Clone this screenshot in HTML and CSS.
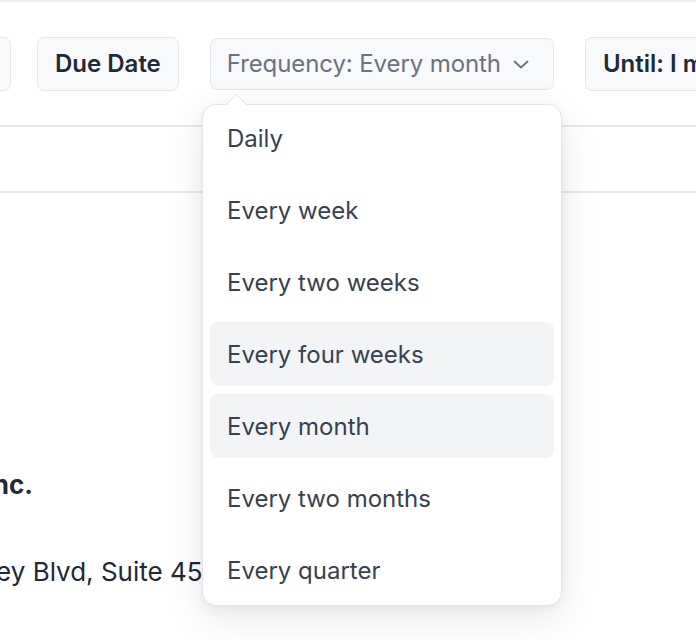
FILE: index.html
```html
<!DOCTYPE html>
<html lang="en">

<head>
    <meta charset="UTF-8" />
    <meta name="viewport" content="width=device-width, initial-scale=1.0" />
    <title>Invoice Schedule</title>
    <link rel="stylesheet" href="styles.css">
</head>

<body>
    <div class="page">
        <div class="toolbar">
            <button class="chip chip-first">Invoice #</button>
            <button class="chip">Due Date</button>
            <button class="chip chip-select">
                <span>Frequency: Every month</span>
                <svg class="chevron" width="16" height="16" viewBox="0 0 16 16">
                    <path d="M1.5 5.5 L8 11.5 L14.5 5.5" fill="none" stroke="currentColor" stroke-width="1.8" stroke-linecap="round" stroke-linejoin="round" />
                </svg>
            </button>
            <button class="chip">Until: I manually stop</button>
        </div>

        <div class="row"></div>

        <div class="client">
            <p class="client-name">Globex Tech Inc.</p>
            <p class="client-address">4200 Valley Blvd, Suite 450</p>
        </div>

        <div class="menu">
            <span class="menu-arrow"></span>
            <ul class="menu-list">
                <li class="menu-item">Daily</li>
                <li class="menu-item">Every week</li>
                <li class="menu-item">Every two weeks</li>
                <li class="menu-item hover">Every four weeks</li>
                <li class="menu-item selected">Every month</li>
                <li class="menu-item">Every two months</li>
                <li class="menu-item">Every quarter</li>
            </ul>
        </div>
    </div>
</body>

</html>
```

FILE: styles.css
```css
body {
    margin: 0;
    font-family: Inter, "Noto Sans", sans-serif;
    background: white;
    color: #1f2937;
    overflow: hidden;
}

.page {
    position: relative;
    height: 640px;
    border-top: 2px solid #eceef1;
}

.toolbar {
    display: flex;
    align-items: center;
    gap: 31px;
    height: 125px;
    margin-left: -100px;
    border-bottom: 2px solid #e7e9ec;
    box-sizing: border-box;
}

.chip {
    display: flex;
    align-items: center;
    height: 54px;
    padding: 0 17px;
    font-family: inherit;
    font-size: 24px;
    font-weight: 600;
    color: #1f2937;
    background: #f8f9fa;
    border: 1px solid #e3e6ea;
    border-radius: 7px;
    white-space: nowrap;
    flex-shrink: 0;
}

.chip-first {
    width: 111px;
    margin-right: -5px;
    color: transparent;
}

.chip-select {
    height: 52px;
    gap: 12px;
    font-weight: 400;
    color: #6b7280;
    padding-left: 16px;
    padding-right: 24px;
}

.chip-select span {
    letter-spacing: -0.1px;
}

.chevron {
    color: #6b7280;
}

.row {
    height: 66px;
    border-bottom: 2px solid #e7e9ec;
    box-sizing: border-box;
}

.client {
    padding-top: 276px;
}

.client-name {
    width: 400px;
    margin: 0 0 0 -367px;
    text-align: right;
    font-size: 26px;
    line-height: 32px;
    font-weight: 700;
    color: #1f2937;
}

.client-address {
    width: 500px;
    margin: 55px 0 0 -281px;
    text-align: right;
    font-size: 26px;
    line-height: 32px;
    color: #1f2937;
}

.menu {
    position: absolute;
    left: 202px;
    top: 102px;
    width: 360px;
    height: 502px;
    box-sizing: border-box;
    background: white;
    border: 1px solid #e2e5e9;
    border-radius: 14px;
    box-shadow: 0 12px 40px rgba(15, 23, 42, 0.10), 0 2px 8px rgba(15, 23, 42, 0.05);
}

.menu-arrow {
    position: absolute;
    left: 26px;
    top: -8px;
    width: 14px;
    height: 14px;
    background: white;
    border-left: 1px solid #e2e5e9;
    border-top: 1px solid #e2e5e9;
    transform: rotate(45deg);
}

.menu-list {
    position: relative;
    list-style: none;
    margin: 0;
    padding: 1px 7px;
    display: flex;
    flex-direction: column;
    gap: 8px;
}

.menu-item {
    height: 64px;
    display: flex;
    align-items: center;
    padding: 0 17px;
    font-size: 24px;
    color: #374151;
    border-radius: 8px;
}

.menu-item.hover,
.menu-item.selected {
    background: #f2f4f6;
}
```
